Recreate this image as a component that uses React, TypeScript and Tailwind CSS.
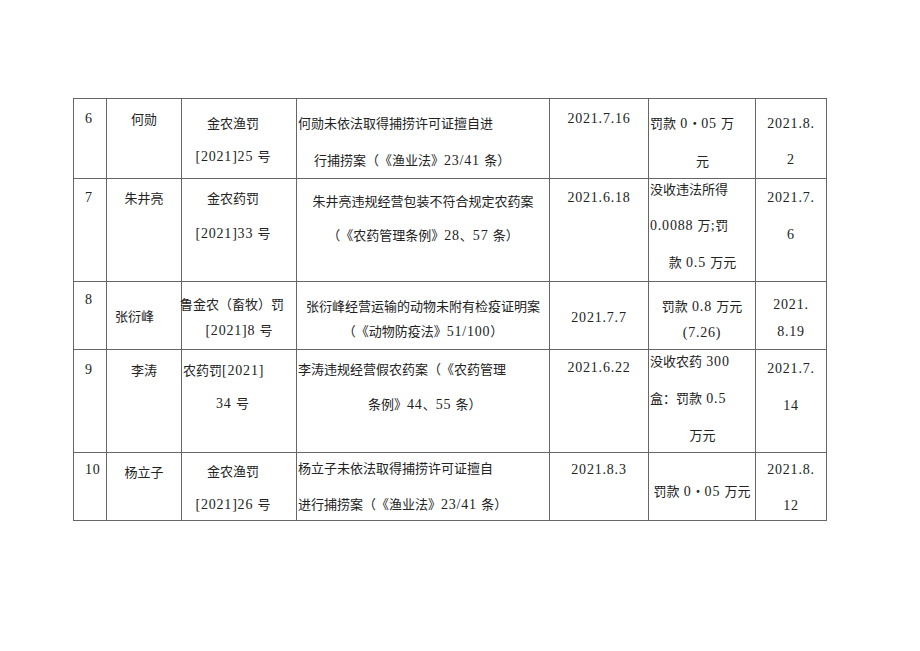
import React from "react";

// ASCII runs (digits, brackets) get a serif face with a bit of tracking, like SimSun half-width digits
function T({ s }: { s: string }) {
    const parts = s.split(/([\x20-\x7e]+)/).filter((p) => p !== "");
    return (
        <>
            {parts.map((p, i) =>
                /^[\x20-\x7e]+$/.test(p) ? (
                    <span key={i} className="font-['Liberation_Serif','Noto_Sans_CJK_SC',serif] text-[14px] tracking-[0.8px] whitespace-pre">
                        {p}
                    </span>
                ) : (
                    <span key={i}>{p}</span>
                )
            )}
        </>
    );
}

function L({ s, c = "" }: { s: string; c?: string }) {
    return (
        <div className={"leading-[20px] whitespace-nowrap " + c}>
            <T s={s} />
        </div>
    );
}

function Cell({ className = "", children }: { className?: string; children: React.ReactNode }) {
    return (
        <div className={"border-l border-t border-[#666] flex flex-col overflow-visible " + className}>
            {children}
        </div>
    );
}

export default function App() {
    return (
        <div className="w-[920px] h-[651px] bg-white pt-[98px] pl-[73px] font-['Noto_Sans_CJK_SC',sans-serif] text-[13px] text-[#222] [text-spacing-trim:space-all]">
            <div className="grid w-max grid-cols-[33px_75px_115px_253px_99px_107px_71px] grid-rows-[80px_103px_68px_103px_68px] border-r border-b border-[#666]">
                {/* 6 */}
                <Cell className="pt-[9px] pl-[11px]"><L s="6" /></Cell>
                <Cell className="pt-[10px] items-center"><L s="何勋" /></Cell>
                <Cell className="pt-[14px] gap-[13px] items-center pr-[12px]">
                    <L s="金农渔罚" />
                    <L s="[2021]25 号" />
                </Cell>
                <Cell className="pt-[14px] gap-[17px] pl-[1px]">
                    <L s="何勋未依法取得捕捞许可证擅自进" />
                    <L c="pl-[16px]" s="行捕捞案（《渔业法》23/41 条）" />
                </Cell>
                <Cell className="pt-[9px] items-center"><L s="2021.7.16" /></Cell>
                <Cell className="pt-[14px] gap-[17px] pl-[1px]">
                    <L s="罚款 0・05 万" />
                    <L c="self-center" s="元" />
                </Cell>
                <Cell className="pt-[14px] gap-[15px] items-center">
                    <L s="2021.8." />
                    <L s="2" />
                </Cell>

                {/* 7 */}
                <Cell className="pt-[8px] pl-[11px]"><L s="7" /></Cell>
                <Cell className="pt-[9px] items-center"><L s="朱井亮" /></Cell>
                <Cell className="pt-[9px] gap-[15px] items-center pr-[12px]">
                    <L s="金农药罚" />
                    <L s="[2021]33 号" />
                </Cell>
                <Cell className="pt-[12px] gap-[14px] items-center">
                    <L s="朱井亮违规经营包装不符合规定农药案" />
                    <L s="（《农药管理条例》28、57 条）" />
                </Cell>
                <Cell className="pt-[8px] items-center"><L s="2021.6.18" /></Cell>
                <Cell className="pt-0 gap-[16px] pl-[1px]">
                    <L s="没收违法所得" />
                    <L s="0.0088 万;罚" />
                    <L c="self-center" s="款 0.5 万元" />
                </Cell>
                <Cell className="pt-[8px] gap-[16px] items-center">
                    <L s="2021.7." />
                    <L s="6" />
                </Cell>

                {/* 8 */}
                <Cell className="pt-[7px] pl-[11px]"><L s="8" /></Cell>
                <Cell className="pt-[24px] items-center pr-[19px]"><L s="张衍峰" /></Cell>
                <Cell className="pt-[12px] gap-[6px]">
                    <L c="-ml-[2px]" s="鲁金农（畜牧）罚" />
                    <L c="self-center" s="[2021]8 号" />
                </Cell>
                <Cell className="pt-[14px] gap-[5px] items-center">
                    <L s="张衍峰经营运输的动物未附有检疫证明案" />
                    <L s="（《动物防疫法》51/100）" />
                </Cell>
                <Cell className="pt-[25px] items-center"><L s="2021.7.7" /></Cell>
                <Cell className="pt-[14px] gap-[5px] items-center">
                    <L s="罚款 0.8 万元" />
                    <L s="(7.26)" />
                </Cell>
                <Cell className="pt-[12px] gap-[6px] items-center">
                    <L s="2021." />
                    <L s="8.19" />
                </Cell>

                {/* 9 */}
                <Cell className="pt-[9px] pl-[11px]"><L s="9" /></Cell>
                <Cell className="pt-[10px] items-center"><L s="李涛" /></Cell>
                <Cell className="pt-[10px] gap-[12px] pl-[1px]">
                    <L s="农药罚[2021]" />
                    <L c="pl-[33px]" s="34 号" />
                </Cell>
                <Cell className="pt-[9px] gap-[15px] pl-[1px]">
                    <L s="李涛违规经营假农药案（《农药管理" />
                    <L c="pl-[70px]" s="条例》44、55 条）" />
                </Cell>
                <Cell className="pt-[7px] items-center"><L s="2021.6.22" /></Cell>
                <Cell className="pt-[1px] gap-[16px] pl-[1px]">
                    <L s="没收农药 300" />
                    <L s="盒：罚款 0.5" />
                    <L c="self-center" s="万元" />
                </Cell>
                <Cell className="pt-[8px] gap-[16px] items-center">
                    <L s="2021.7." />
                    <L s="14" />
                </Cell>

                {/* 10 */}
                <Cell className="pt-[6px] pl-[11px]"><L s="10" /></Cell>
                <Cell className="pt-[9px] items-center"><L s="杨立子" /></Cell>
                <Cell className="pt-[8px] gap-[13px] items-center pr-[12px]">
                    <L s="金农渔罚" />
                    <L s="[2021]26 号" />
                </Cell>
                <Cell className="pt-[5px] gap-[16px] pl-[1px]">
                    <L s="杨立子未依法取得捕捞许可证擅自" />
                    <L s="进行捕捞案（《渔业法》23/41 条）" />
                </Cell>
                <Cell className="pt-[6px] items-center"><L s="2021.8.3" /></Cell>
                <Cell className="pt-[28px] items-center"><L s="罚款 0・05 万元" /></Cell>
                <Cell className="pt-[6px] gap-[15px] items-center">
                    <L s="2021.8." />
                    <L s="12" />
                </Cell>
            </div>
        </div>
    );
}
